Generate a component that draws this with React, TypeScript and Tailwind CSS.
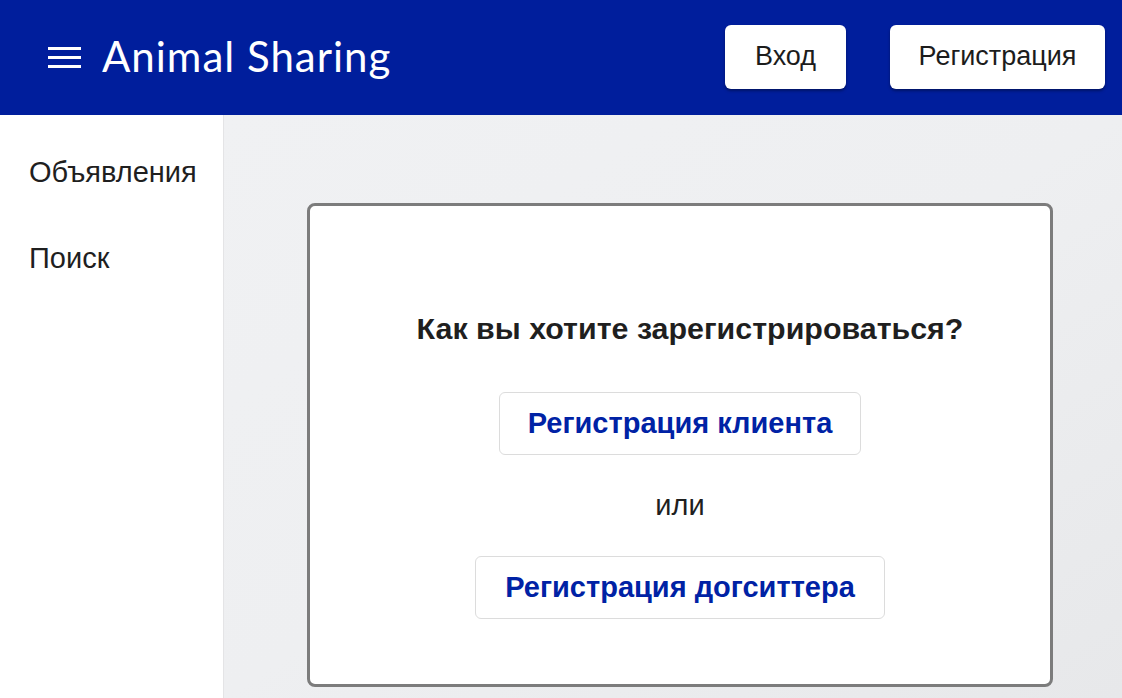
export default function App() {
  return (
    <div className="w-[1122px] h-[698px] overflow-hidden flex flex-col font-['Liberation_Sans',Arial,sans-serif] bg-[#eff0f2]">
      {/* Header */}
      <header className="h-[115px] shrink-0 bg-[#001e9c] flex items-center pl-[48px] pr-[17px]">
        <svg width="33" height="21" viewBox="0 0 33 21" className="text-white shrink-0">
          <rect x="0" y="0" width="33" height="3" fill="currentColor" />
          <rect x="0" y="9" width="33" height="3" fill="currentColor" />
          <rect x="0" y="18" width="33" height="3" fill="currentColor" />
        </svg>
        <span className="ml-[21px] text-white text-[42px] tracking-[1px] font-['Lato',sans-serif] leading-none pb-[3px]">
          Animal Sharing
        </span>
        <div className="ml-auto flex gap-[44px] pb-[2px]">
          <button className="h-[64px] w-[121px] bg-white rounded-[6px] shadow-[0_2px_3px_rgba(0,0,0,0.35)] text-[27px] text-[#1c1c1c]">
            Вход
          </button>
          <button className="h-[64px] w-[215px] bg-white rounded-[6px] shadow-[0_2px_3px_rgba(0,0,0,0.35)] text-[27px] text-[#1c1c1c]">
            Регистрация
          </button>
        </div>
      </header>

      <div className="flex flex-1 min-h-0">
        {/* Sidebar */}
        <aside className="w-[224px] shrink-0 bg-white border-r border-[#e4e4e6] pt-[40px] pl-[29px] flex flex-col gap-[52px] text-[29px] leading-[34px] text-[#1f1f1f]">
          <a>Объявления</a>
          <a>Поиск</a>
        </aside>

        {/* Main */}
        <main className="flex-1 bg-gradient-to-br from-[#f0f1f3] via-[#eeeff1] to-[#e7e8ea]">
          <div className="ml-[83px] mt-[88px] w-[746px] h-[484px] bg-white border-[3px] border-[#7c7c7c] rounded-[8px] flex flex-col items-center pt-[104px]">
            <h2 className="pl-[20px] text-[30.4px] font-bold text-[#1f1f1f] leading-[36px]">
              Как вы хотите зарегистрироваться?
            </h2>
            <button className="mt-[46px] h-[63px] px-[28px] border border-[#dcdcdc] rounded-[6px] text-[29px] font-bold text-[#0022a5]">
              Регистрация клиента
            </button>
            <span className="mt-[32px] text-[29px] text-[#1f1f1f] leading-[36px]">или</span>
            <button className="mt-[33px] h-[63px] px-[29px] border border-[#dcdcdc] rounded-[6px] text-[29px] font-bold text-[#0022a5]">
              Регистрация догситтера
            </button>
          </div>
        </main>
      </div>
    </div>
  );
}
